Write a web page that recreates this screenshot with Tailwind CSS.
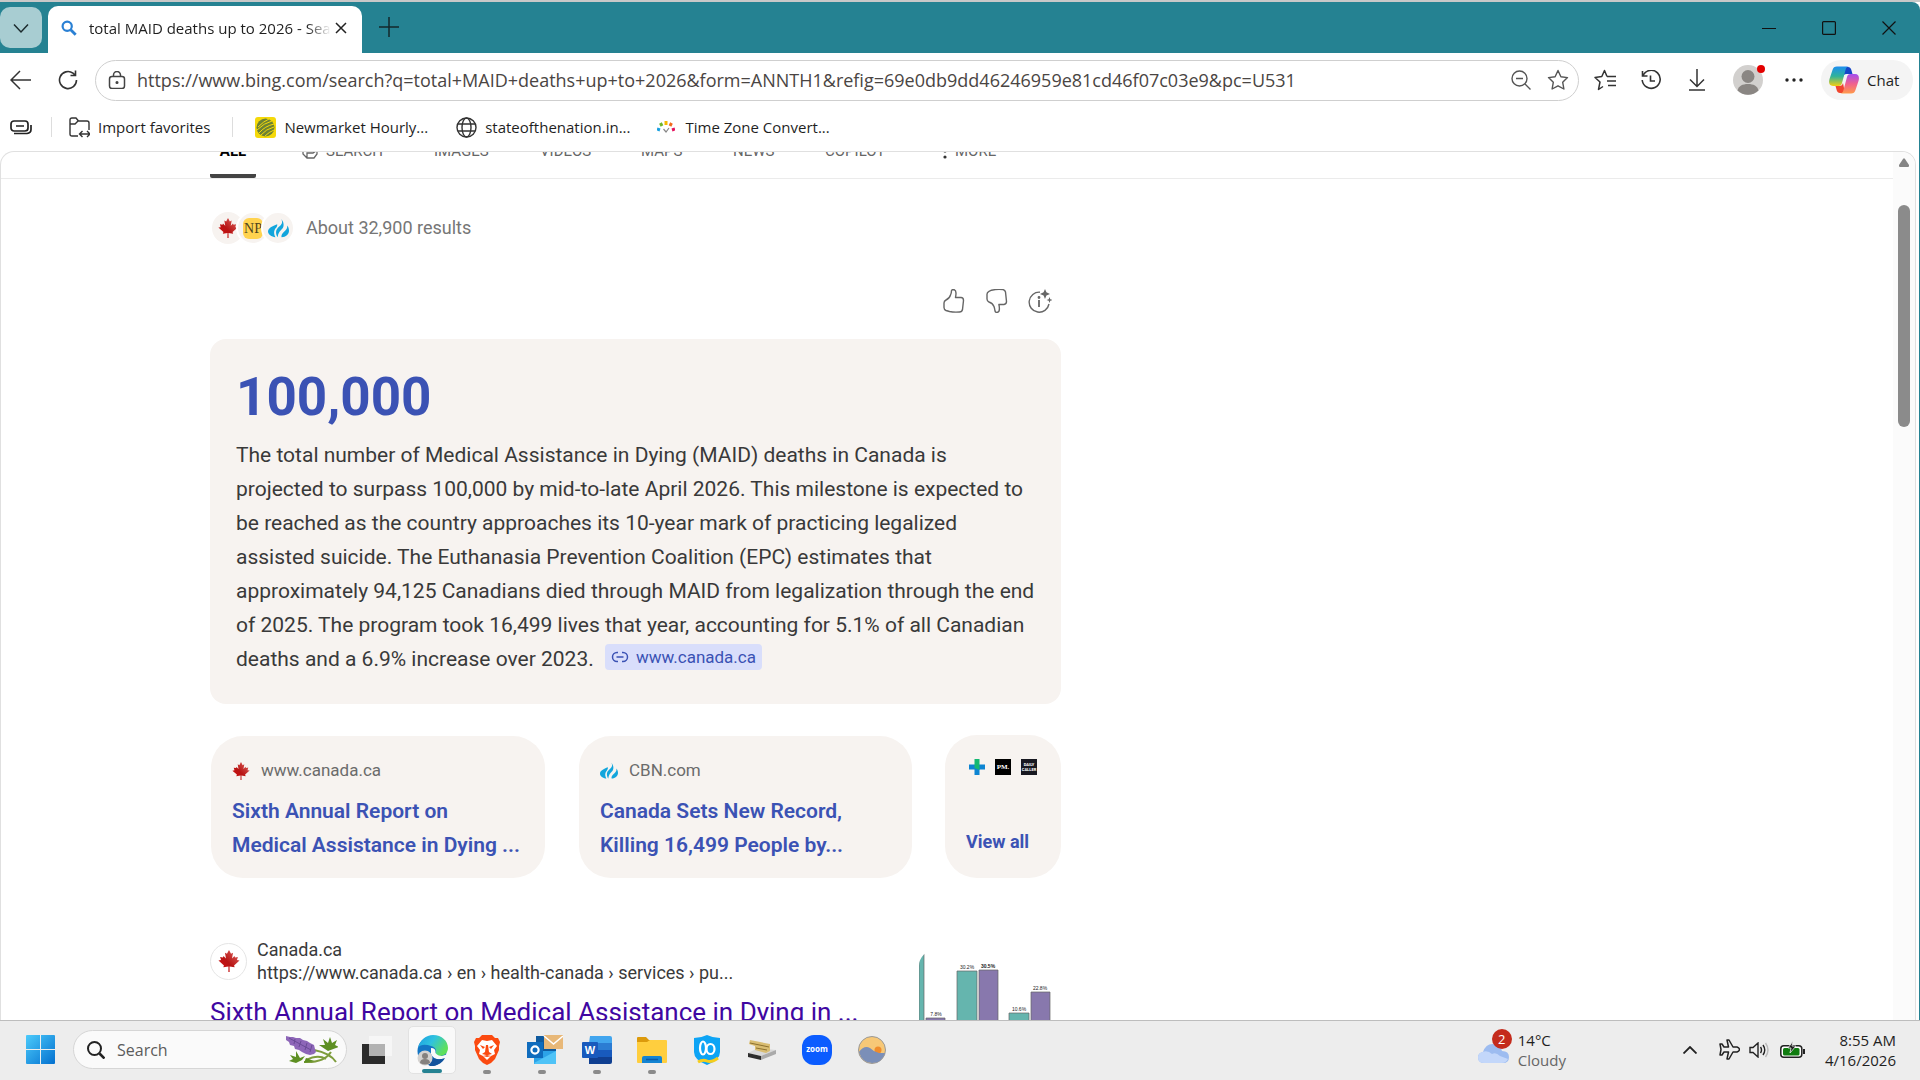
<!doctype html>
<html lang="en">
  <head>
    <meta charset="UTF-8">
    <title>total MAID deaths up to 2026 - Search</title>
    <script src="https://cdn.jsdelivr.net/npm/@tailwindcss/browser@4"></script>
  </head>
  <body class="bg-white font-['Open_Sans','Noto_Sans',sans-serif] text-[#1f1f1f]">

    <!-- shared shapes -->
    <svg class="absolute size-0">
      <defs>
        <linearGradient id="leaf-fill" x1="0" y1="1" x2="1" y2="0"><stop offset="0" stop-color="#d40d0d"/><stop offset=".45" stop-color="#b81414"/><stop offset="1" stop-color="#df6a64"/></linearGradient>
        <symbol id="leaf" viewBox="0 0 24 24">
          <path fill="url(#leaf-fill)" d="M12 0 9.8 4.2 7.6 3.1 8.7 9.2 6 6.500 5.400 8.100 2.300 7.500 3.300 11 0.500 11.500 6.500 16.800 5.800 18.900 11.400 18.100 11.300 24h1.400l-.1-5.900 5.600.8-.7-2.100 6-5.300-2.800-.5 1-3.500-3.100.6-.6-1.600-2.700 2.700 1.100-6.100-2.200 1.100z"/>
        </symbol>
        <symbol id="flame" viewBox="0 0 24 24">
          <path fill="#12a5dc" d="M15 1c2.500 4 .5 6.500-2.500 9-3.500 3-4.500 7-1.500 12 .5-5 3-7.500 5.500-10C18.500 9.500 18.500 4.500 15 1zM22 8.500c.3 4-2 5.500-4.500 8-1.800 1.900-2.500 3.700-2 5.500 5-.3 8.500-3.500 8.500-7.500 0-2.500-.8-4.500-2-6zM10.500 7C5 9 0 11.500 0 15.500c0 3.500 4 6 8.500 6.500C6 17 7 14 9 11.500c1.200-1.500 1.800-3 1.500-4.500z"/>
        </symbol>
      </defs>
    </svg>

    <div class="h-screen flex flex-col overflow-hidden border-t-2 border-[#c8c8c8]">

      <!-- title bar -->
      <div class="h-[51px] shrink-0 bg-[#258292] rounded-tr-lg flex items-start">
        <button class="mt-[5px] w-[42px] h-[41px] rounded-[10px] bg-[#a8cdd2] flex items-center justify-center" aria-label="Tab actions">
          <svg class="size-4" viewBox="0 0 16 16" fill="none" stroke="#1c2b2e" stroke-width="1.5"><path d="M1 4.500 8 12l7-7.500"/></svg>
        </button>
        <div class="mt-1 ml-[6px] w-[314px] h-[47px] rounded-t-[10px] bg-white flex items-center pl-[13px] pr-3 pb-[3px]">
          <svg class="size-4 shrink-0" viewBox="0 0 16 16" fill="none" stroke="#2a80d4" stroke-width="2.200"><circle cx="6.200" cy="6.200" r="4.600"/><path d="m9.700 9.700 5 5" stroke-width="2.800"/></svg>
          <span class="ml-3 w-[242px] overflow-hidden whitespace-nowrap text-[15px] mask-r-from-90%">total MAID deaths up to 2026 - Search</span>
          <button class="shrink-0 ml-1" aria-label="Close tab"><svg class="size-3" viewBox="0 0 12 12" stroke="#222" stroke-width="1.500"><path d="m1 1 10 10M11 1 1 11"/></svg></button>
        </div>
        <button class="mt-[15px] ml-[17px]" aria-label="New tab"><svg class="size-5" viewBox="0 0 20 20" stroke="#13282b" stroke-width="1.500"><path d="M10 0v20M0 10h20"/></svg></button>
        <div class="ml-auto mt-[19px] mr-6 flex items-center gap-[46px]">
          <button aria-label="Minimize"><svg class="size-[14px]" viewBox="0 0 14 14" stroke="#111"><path d="M0 7.500h14"/></svg></button>
          <button aria-label="Maximize"><svg class="size-[14px]" viewBox="0 0 14 14" fill="none" stroke="#111" stroke-width="1.200"><rect x=".6" y=".6" width="12.800" height="12.800" rx="1"/></svg></button>
          <button aria-label="Close"><svg class="size-[14px]" viewBox="0 0 14 14" stroke="#111" stroke-width="1.200"><path d="m.5.5 13 13m0-13-13 13"/></svg></button>
        </div>
      </div>

      <!-- toolbar -->
      <div class="shrink-0 h-[54px] flex items-center pl-[10px] pr-[6px] border-r border-[#258292]">
        <button aria-label="Back"><svg class="size-[22px]" viewBox="0 0 22 22" fill="none" stroke="#333" stroke-width="1.500"><path d="M21 11H1M10 2l-9 9 9 9"/></svg></button>
        <button class="ml-[26px]" aria-label="Refresh"><svg class="size-5" viewBox="0 0 20 20" fill="none" stroke="#333" stroke-width="1.600"><path d="M18.500 10A8.500 8.500 0 1 1 15 3.200L17 5M17.500.500V5.500H12.500"/></svg></button>
        <div class="ml-[17px] flex-1 h-[41px] rounded-full border border-[#cfcfcf] flex items-center pl-3 pr-[9px]">
          <svg class="size-[18px] shrink-0" viewBox="0 0 18 18" fill="none" stroke="#444" stroke-width="1.500"><rect x="1.500" y="5.500" width="15" height="12" rx="2.500"/><path d="M5.500 5.500V4a3.500 3.500 0 0 1 7 0v1.500"/><circle cx="9" cy="11.500" r=".8" fill="#444"/></svg>
          <input type="text" aria-label="Address" class="ml-[11px] flex-1 text-[18px] text-[#4a4543] outline-none" value="https://www.bing.com/search?q=total+MAID+deaths+up+to+2026&amp;form=ANNTH1&amp;refig=69e0db9dd46246959e81cd46f07c03e9&amp;pc=U531">
          <button aria-label="Zoom"><svg class="size-5" viewBox="0 0 20 20" fill="none" stroke="#555" stroke-width="1.400"><circle cx="8.500" cy="8.500" r="7.500"/><path d="m14 14 5.500 5.500M5 8.500h7"/></svg></button>
          <button class="ml-4" aria-label="Add to favorites"><svg class="size-[22px]" viewBox="0 0 22 22" fill="none" stroke="#555" stroke-width="1.400" stroke-linejoin="round"><path d="m11 1.500 2.900 6.200 6.600.9-4.800 4.700 1.200 6.700-5.900-3.200L5.100 20l1.200-6.700L1.500 8.600l6.600-.9z"/></svg></button>
        </div>
        <div class="ml-[15px] flex items-center gap-[25px]">
          <button aria-label="Favorites"><svg class="size-[22px]" viewBox="0 0 22 22" fill="none" stroke="#333" stroke-width="1.500" stroke-linejoin="round"><path d="M13 7.500 10.500 1.500 7.800 7.500 1 8.500l5 4.500L4.500 20.500l4.500-3M13 7.500h9M13 12h9M14 16.500h8"/></svg></button>
          <button aria-label="History"><svg class="size-5" viewBox="0 0 20 20" fill="none" stroke="#333" stroke-width="1.600"><path d="M2 5.500A9 9 0 1 1 1.200 10M1.500 1v5h5M9.500 5.500v5.500H14"/></svg></button>
          <button aria-label="Downloads"><svg class="size-[22px]" viewBox="0 0 22 22" fill="none" stroke="#333" stroke-width="1.500"><path d="M11 0v17M4 10.500l7 7 7-7M3 21h16"/></svg></button>
          <button class="relative" aria-label="Profile">
            <svg class="size-[30px]" viewBox="0 0 30 30"><circle cx="15" cy="15" r="15" fill="#d2d0ce"/><circle cx="15" cy="11.500" r="6.500" fill="#8a8683"/><path fill="#8a8683" d="M4.500 25.500c1-4.500 5-6.500 10.500-6.500s9.500 2 10.500 6.500a15 15 0 0 1-21 0z"/></svg>
            <span class="absolute top-0 -right-[2px] size-2 rounded-full bg-[#e30000]"></span>
          </button>
        </div>
        <button class="ml-[22px]" aria-label="Settings and more"><svg class="w-[18px] h-5" viewBox="0 0 18 20" fill="#222"><circle cx="2" cy="10" r="1.700"/><circle cx="9" cy="10" r="1.700"/><circle cx="16" cy="10" r="1.700"/></svg></button>
        <button class="ml-[18px] h-10 w-[92px] rounded-full bg-[#f4f4f4] flex items-center pl-2 gap-2 text-[15px]">
          <svg class="size-[30px]" viewBox="0 0 30 30">
            <defs>
              <linearGradient id="cp-a" x1="0" y1="0" x2="0" y2="1"><stop offset="0" stop-color="#1c8ef0"/><stop offset=".5" stop-color="#2fb39a"/><stop offset="1" stop-color="#f4cf10"/></linearGradient>
              <linearGradient id="cp-b" x1="0" y1="0" x2="0" y2="1"><stop offset="0" stop-color="#a24ff0"/><stop offset=".5" stop-color="#f0608e"/><stop offset="1" stop-color="#ff9a4a"/></linearGradient>
            </defs>
            <path fill="#1546c8" d="M14 2h5c2 0 3 1.500 3.500 3.500l1 3.500h-6c-2 0-3 1-3.500 3z"/>
            <path fill="url(#cp-a)" d="M8 1.500h12c-2 0-3 1.500-3.500 3.500l-3.500 13c-.5 2-1.500 3-3.500 3H4c-4 0-4.500-3.500-3.500-7L3.500 5C4.200 2.500 5.500 1.500 8 1.500z"/>
            <path fill="#f0452e" d="M16 28h-5c-2 0-3-1.500-3.500-3.500l-1-3.500h4c2 0 3-1 3.500-3z"/>
            <path fill="url(#cp-b)" d="M22 28.500H11c2 0 3-1.500 3.500-3.500L18 12c.5-2 1.500-3 3.500-3H26c4 0 4.500 3.500 3.500 7l-3 9c-.7 2.500-2 3.500-4.500 3.500z"/>
          </svg>
          Chat
        </button>
      </div>

      <!-- favorites bar -->
      <div class="shrink-0 h-[44px] flex items-center pl-[10px] pb-1 text-[15px] border-r border-[#258292]">
        <button aria-label="Collections"><svg class="w-[22px] h-4" viewBox="0 0 22 16" fill="none" stroke="#222" stroke-width="1.700"><rect x="1" y="2" width="17" height="10" rx="3"/><path d="M6 7h8M4 14.500h13q4-.5 4-4V6"/></svg></button>
        <span class="ml-[19px] h-5 w-px bg-[#ddd]"></span>
        <button class="ml-[17px] flex items-center gap-2">
          <svg class="size-[21px]" viewBox="0 0 21 21" fill="none" stroke="#333" stroke-width="1.400"><path d="M9 19H3q-2 0-2-2V3q0-2 2-2h4l2.500 3H18q2 0 2 2v7M1 7h5l3-3M11 17h10M13.500 14l-3 3 3 3M18 14l3 3-3 3"/></svg>
          Import favorites
        </button>
        <span class="ml-[22px] h-5 w-px bg-[#ddd]"></span>
        <a href="#" class="ml-[22px] flex items-center gap-2">
          <svg class="size-[21px]" viewBox="0 0 21 21"><rect width="21" height="21" rx="3" fill="#f5d90a"/><circle cx="10.500" cy="10.500" r="9" fill="#6d8233"/><path d="M3 10q6-6 11-8M2 13q7-7 15-9M4 16Q10 9 19 7M6 18q5-6 13-8M10 19q4-4 9-6" stroke="#f5d90a" fill="none"/></svg>
          Newmarket Hourly...
        </a>
        <a href="#" class="ml-7 flex items-center gap-2">
          <svg class="size-[21px]" viewBox="0 0 21 21" fill="none" stroke="#333" stroke-width="1.400"><circle cx="10.500" cy="10.500" r="9.500"/><ellipse cx="10.500" cy="10.500" rx="4.500" ry="9.500"/><path d="M2 7h17M2 14h17"/></svg>
          stateofthenation.in...
        </a>
        <a href="#" class="ml-[27px] flex items-center gap-[10px]">
          <svg class="w-[18px] h-3" viewBox="0 0 18 12" fill="none" stroke-width="3"><path stroke="#18a0e0" d="m0 8 3 1"/><path stroke="#6fb52c" d="m3.500 2 1.500 3"/><path stroke="#f6b800" d="M9 0v4"/><path stroke="#f06a1e" d="m14.500 2-1.500 3"/><path stroke="#e5125d" d="m18 8-3 1"/><path stroke="#888" stroke-width="1.200" d="m6.500 8 2.500 3 3-4"/></svg>
          Time Zone Convert...
        </a>
      </div>

      <!-- page -->
      <div class="flex-1 min-h-0 flex overflow-hidden border-r border-[#258292] pr-[3px]">
        <div class="flex-1 min-w-0 flex border border-b-0 border-[#e0e0e0] rounded-t-[14px] overflow-hidden font-[Roboto,sans-serif]">
          <main class="flex-1 min-w-0">

            <!-- scope tabs, scrolled most of the way under the toolbar -->
            <nav class="h-[27px] border-b border-[#ebebeb] overflow-hidden flex items-end pl-[209px] text-[15px] text-[#666]">
              <div class="flex items-end h-10 w-full">
                <a href="#" class="w-[46px] border-b-4 border-[#444] text-center font-bold text-black pb-3 rounded-b-xs">ALL</a>
                <a href="#" class="ml-[46px] w-[80px] flex items-center gap-2 pb-4"><svg class="size-4 shrink-0" viewBox="0 0 16 16" fill="none" stroke="#666" stroke-width="1.300"><path d="M1 5v6l4 4h7l3-4V5L8 1zM5 15v-5h6l3-2"/></svg>SEARCH</a>
                <a href="#" class="ml-[52px] w-[54px] pb-4">IMAGES</a>
                <a href="#" class="ml-[52px] w-[50px] pb-4">VIDEOS</a>
                <a href="#" class="ml-[51px] w-[42px] pb-4">MAPS</a>
                <a href="#" class="ml-[50px] w-[42px] pb-4">NEWS</a>
                <a href="#" class="ml-[50px] w-[60px] pb-4">COPILOT</a>
                <a href="#" class="ml-[58px] flex items-center gap-2 pb-4"><svg class="w-1 h-4" viewBox="0 0 4 16" fill="#333"><circle cx="2" cy="2" r="1.600"/><circle cx="2" cy="8" r="1.600"/><circle cx="2" cy="14" r="1.600"/></svg>MORE</a>
              </div>
            </nav>

            <div class="ml-[209px] w-[851px]">
              <div class="mt-[33px] h-8 flex items-center text-lg text-[#767676]">
                <div class="flex items-center pl-[2px]">
                  <span class="size-8 rounded-full bg-[#f7f3f0] flex items-center justify-center"><svg class="size-5"><use href="#leaf"/></svg></span>
                  <span class="-ml-2 size-[34px] rounded-full bg-[#f7f3f0] border-2 border-white flex items-center justify-center"><span class="w-5 h-[21px] shrink-0 rounded-md bg-[#ffd34f] text-[#4f4320] text-[14px] leading-[21px] text-center font-['Liberation_Serif',serif]">NP</span></span>
                  <span class="-ml-[9px] size-[34px] rounded-full bg-[#f7f3f0] border-2 border-white flex items-center justify-center"><svg class="size-[21px]"><use href="#flame"/></svg></span>
                </div>
                <span class="ml-[11px]">About 32,900 results</span>
              </div>

              <div class="mt-[43px] h-[28px] flex items-center justify-end gap-[19px] pr-[9px]">
                <button aria-label="Like"><svg class="size-6" viewBox="0 0 24 24" fill="none" stroke="#666" stroke-width="1.400" stroke-linejoin="round"><path d="M8.500 6q1-2 1-4.500Q10 .5 11.500.500q2.500.3 2.500 3.500 0 2.500-.5 4.500H19q2.500 0 2.500 3l-1 9q-.5 2.500-3 2.500-5.500.5-10-.5L4 21.500q-2-1-2-3V14q0-2 2-3 3.500-1.500 4.500-5z"/></svg></button>
                <button aria-label="Dislike"><svg class="size-6" viewBox="0 0 24 24" fill="none" stroke="#666" stroke-width="1.400" stroke-linejoin="round"><path d="M9 17.500q.7 2 1 4.500.5 1.500 2 1.400 2.400-.2 2.400-3.400 0-2.500-.5-4.500H19q2.500-.5 2.500-3L20.500 3q-.5-2-2.500-2.400-6-.6-11.500.6L4 2.300q-2 1-2 3V10q0 2 2 3 3.500 1 5 4.500z"/></svg></button>
                <button aria-label="About this answer"><svg class="size-6" viewBox="0 0 24 24" fill="none" stroke="#666" stroke-width="1.400"><path d="M12 3.200A10 10 0 1 0 21 15"/><path d="M11 11v7" stroke-width="1.800"/><circle cx="11" cy="8.500" r=".7" fill="#666"/><path fill="#666" stroke="none" d="m17 0 1.400 3.200L22 5l-3.600 1.500L17 10l-1.400-3.500L12 5l3.600-1.800zM21.500 8l.8 2.200 2.200.8-2.200.8-.8 2.200-.8-2.200-2.200-.8 2.200-.8z"/></svg></button>
              </div>

              <section class="mt-6 rounded-2xl bg-[#f7f3f0] px-[26px] pt-[26px] pb-7">
                <h2 class="text-[53px] leading-[64px] font-bold text-[#3b52b4]">100,000</h2>
                <p class="mt-[9px] text-[21px] leading-[34px] text-[#393939] whitespace-nowrap">The total number of Medical Assistance in Dying (MAID) deaths in Canada is<br>projected to surpass 100,000 by mid-to-late April 2026. This milestone is expected to<br>be reached as the country approaches its 10-year mark of practicing legalized<br>assisted suicide. The Euthanasia Prevention Coalition (EPC) estimates that<br>approximately 94,125 Canadians died through MAID from legalization through the end<br>of 2025. The program took 16,499 lives that year, accounting for 5.1% of all Canadian<br>deaths and a 6.9% increase over 2023.
                  <a href="#" class="ml-[6px] inline-flex h-[26px] items-center gap-[7px] rounded bg-[#d9defb] px-[6px] align-[2px] text-[17px] leading-[26px] text-[#3b52b4]"><svg class="w-[18px] h-[14px]" viewBox="0 0 18 14" fill="none" stroke="#3b52b4" stroke-width="1.500"><path d="M7 2.500H6a4.500 4.500 0 0 0 0 9h1M11 2.500h1a4.500 4.500 0 0 1 0 9h-1M5.500 7h7"/></svg>www.canada.ca</a>
                </p>
              </section>

              <div class="mt-[31px] flex items-end pl-px">
                <a href="#" class="w-[334px] h-[142px] rounded-[32px] bg-[#f7f3f0] pl-[21px] pt-[22px]">
                  <div class="h-[26px] flex items-center gap-[11px] text-[17px] text-[#6b6b6b]"><svg class="size-[18px]"><use href="#leaf"/></svg>www.canada.ca</div>
                  <h3 class="mt-[10px] text-[21px] leading-[34px] font-semibold text-[#3b52b4]">Sixth Annual Report on<br>Medical Assistance in Dying ...</h3>
                </a>
                <a href="#" class="ml-[34px] w-[333px] h-[142px] rounded-[32px] bg-[#f7f3f0] pl-[21px] pt-[22px]">
                  <div class="h-[26px] flex items-center gap-[11px] text-[17px] text-[#6b6b6b]"><svg class="size-[18px]"><use href="#flame"/></svg>CBN.com</div>
                  <h3 class="mt-[10px] text-[21px] leading-[34px] font-semibold text-[#3b52b4]">Canada Sets New Record,<br>Killing 16,499 People by...</h3>
                </a>
                <a href="#" class="ml-auto w-[116px] h-[143px] rounded-[32px] bg-[#f7f3f0] pl-[21px] py-6 flex flex-col justify-between">
                  <div class="flex gap-[10px] pl-[3px]">
                    <svg class="size-4" viewBox="0 0 16 16"><path fill="#0d84d2" d="M0 5.500h16v5H0zM5.500 10h5v6h-5z"/><path fill="#14b872" d="M5.500 0h5v11l-5-2z"/></svg>
                    <span class="size-4 bg-black text-white text-[7px] leading-4 text-center font-bold font-['Liberation_Serif',serif]">PM.</span>
                    <span class="size-4 bg-[#181820] text-white text-[4px] leading-[5px] pt-[3px] text-center font-bold">DAILY<br>CALLER</span>
                  </div>
                  <span class="text-[18px] leading-6 font-bold text-[#3b52b4]">View all</span>
                </a>
              </div>

              <article class="mt-[60px] flex justify-between">
                <div class="min-w-0">
                  <div class="flex items-center gap-[10px] text-[#3a3a3a]">
                    <span class="size-[37px] rounded-full border border-[#e5e5e5] flex items-center justify-center"><svg class="size-[22px]"><use href="#leaf"/></svg></span>
                    <div class="text-[18px] leading-[23px]">Canada.ca<br>https://www.canada.ca › en › health-canada › services › pu...</div>
                  </div>
                  <a href="#" class="block mt-3 text-[26px] leading-8 text-[#4007a2]">Sixth Annual Report on Medical Assistance in Dying in ...</a>
                </div>
                <svg class="mt-3 w-[142px] h-[80px] rounded-tl-2xl shrink-0" viewBox="0 0 142 80">
                  <g stroke="#666" stroke-width=".7">
                    <path fill="#65b5ae" d="M0 0h5v80H0zM38 21h20v59H38zM90 63h20v17H90z"/>
                    <path fill="#8878ad" d="M7 68h19v12H7zM60 20h19v60H60zM112 42h19v38h-19z"/>
                  </g>
                  <g font-family="Liberation Sans, sans-serif" font-size="5" fill="#222" text-anchor="middle"><text x="17" y="66">7.8%</text><text x="48" y="19">30.2%</text><text x="69" y="18" font-weight="bold">30.5%</text><text x="100" y="61">10.6%</text><text x="121" y="40">22.8%</text></g>
                </svg>
              </article>
            </div>
          </main>

          <!-- scrollbar -->
          <div class="w-[22px] bg-[#fbfbfb] flex flex-col items-center pt-[6px]">
            <svg class="w-[10px] h-[9px]" viewBox="0 0 10 9" fill="#858585"><path d="M4 1q1-1.500 2 0l4 6q.5 1.500-1 2H1q-1.500-.5-1-2z"/></svg>
            <div class="mt-[38px] w-3 h-[222px] rounded-full bg-[#8b8b8b]"></div>
          </div>
        </div>
      </div>

      <!-- taskbar -->
      <footer class="shrink-0 h-[60px] border-t border-[#bdbdbd] bg-[#ededed] flex items-center pl-[26px] pr-6 pb-[2px]">
        <button aria-label="Start"><svg class="size-[29px]" viewBox="0 0 29 29"><defs><linearGradient id="win" x1="0" y1="0" x2="1" y2="1"><stop offset="0" stop-color="#4ccbfb"/><stop offset="1" stop-color="#0370cf"/></linearGradient></defs><path fill="url(#win)" d="M1 0h13v14H0V1q0-1 1-1zM15 0h13q1 0 1 1v13H15zM0 15h14v14H1q-1 0-1-1zM15 15h14v13q0 1-1 1H15z"/></svg></button>
        <label class="ml-[18px] w-[274px] h-[39px] rounded-full border border-[#d6d6d6] bg-[#fafafa] flex items-center pl-[13px] pr-2">
          <svg class="size-[18px] shrink-0" viewBox="0 0 18 18" fill="none" stroke="#222" stroke-width="2"><circle cx="7.500" cy="7.500" r="6.500"/><path d="m12.500 12.500 5 5" stroke-width="2.600"/></svg>
          <input type="search" placeholder="Search" class="ml-3 w-[140px] text-[16px] placeholder:text-[#5c5c5c] outline-none">
          <svg class="ml-auto w-[52px] h-[30px]" viewBox="0 0 52 30" fill="none">
            <path stroke="#7d9c3c" stroke-width="2" d="M28 15q16 3 22 12M18 27q20 1 27-10M20 25q12-6 20-1"/>
            <path fill="#5d8f22" d="M42 16l-9-6 6 0-2-6 5 4 2-6 2 6 5-3-2 5 4 2zM10 28l-7-2 4-2-3-4 6 2 0-6 4 7 5-2-3 4zM18 28l2-5 8 3z"/>
            <path fill="#8d66b8" d="M0 1l4 1 3 0 3 1 4 0 3 2 4 1 3 2 4 2 1 4 1 3-2 2-4 1-4-1-4-2-3-2-4-1-1-3-4-1-1-3-3-2z"/>
            <path stroke="#6a4a96" stroke-width="1" d="M3 3l22 12M9 4l-1 5M15 6l-2 6M21 8l-2 7M26 10l-2 7"/>
          </svg>
        </label>
        <div class="ml-[6px] flex items-center gap-[7px]">
          <button class="size-12 flex items-center justify-center" aria-label="Task view"><svg class="w-[30px] h-7" viewBox="0 0 30 28"><path fill="#2b2b2b" d="M0 8h23v20H0z"/><path fill="#f6f6f6" fill-opacity=".92" d="M7 0h23v20H7z"/><path fill="#b2b2b2" d="M7 8h16v12H7z"/></svg></button>
          <button class="size-12 rounded-[5px] bg-[#f9f9f9] border border-[#e2e2e2] flex flex-col items-center justify-between pt-2" aria-label="Microsoft Edge">
            <svg class="size-[31px]" viewBox="0 0 31 31"><defs><linearGradient id="edge-top" x1="0" y1="0" x2="1" y2=".5"><stop offset="0" stop-color="#1b9de2"/><stop offset=".5" stop-color="#2fc2df"/><stop offset="1" stop-color="#5fe05a"/></linearGradient></defs><circle cx="15" cy="16" r="14.500" fill="#1475c4"/><path fill="url(#edge-top)" d="M1 13C3 5 9 0 16 0c9 0 15 6 15 13 0 5-4 8-8 8-3 0-5-1-5-2 2-3 1-7-4-8C9 9 3 9 1 13z"/><path fill="#f9f9f9" d="M14 13q5 0 4.500 5 2 3 6.500 3l6-2v6l-4-1q-10 2-13-5z"/><path fill="#12539c" d="M13 17c0 6 6 9 15 6-3 6-11 9-15 8-5-3-4-11 0-14z"/><circle cx="8" cy="23" r="7.500" fill="#d4d2d0"/><circle cx="8" cy="21" r="3" fill="#85817e"/><path fill="#85817e" d="M3 28q0-4 5-4t5 4q-5 3-10 0z"/></svg>
            <span class="w-5 h-1 rounded-full bg-[#258292]"></span>
          </button>
          <button class="size-12 flex flex-col items-center justify-between pt-[9px]" aria-label="Brave">
            <svg class="w-[26px] h-[30px]" viewBox="0 0 26 30"><path fill="#fb4a10" d="M8 0h10l3 3 3 0 2 4-1 4 0 4-4 9q-3 4-8 6-5-2-8-6L1 15v-4L0 7l2-4h3z"/><path fill="#fff" d="M8 5l5 1 5-1 5 6-3 4 1 4-4 2-4 4-4-4-4-2 1-4-3-4z"/><path fill="#fb4a10" d="M6 10l5 2-2 2zM20 10l-5 2 2 2zM12 10h2l1 7 3 2-4 1h-2l-4-1 3-2zM9 21l4-1 4 1-4 1z"/></svg>
            <span class="w-2 h-1 rounded-full bg-[#8a8a8a]"></span>
          </button>
          <button class="size-12 flex flex-col items-center justify-between pt-[9px]" aria-label="Outlook">
            <svg class="w-[42px] h-[30px] shrink-0" viewBox="-6 0 42 30"><path fill="#0f5a9e" d="M9 1h20v26H9z"/><path fill="#1f87d6" d="M17 1h12v13H17z"/><path fill="#2ca3e8" d="M7 16h22v13H7z"/><path fill="#4fc3f7" d="m7 28 22-12v13H8z"/><path fill="#0f6cbd" d="M0 7h16v16H0z"/><circle cx="8" cy="15" r="3.600" fill="none" stroke="#fff" stroke-width="2.200"/><path fill="#e8b878" d="M17 0h19v14H17z"/><path fill="none" stroke="#fff" stroke-width="1.500" d="m17 1 9.500 8L36 1"/></svg>
            <span class="w-2 h-1 rounded-full bg-[#8a8a8a]"></span>
          </button>
          <button class="size-12 flex flex-col items-center justify-between pt-[10px]" aria-label="Word">
            <svg class="w-[30px] h-7" viewBox="0 0 30 28"><path fill="#41a5ee" d="M8 0h20q2 0 2 2v5H7z"/><path fill="#2b7cd3" d="M7 7h23v7H7z"/><path fill="#185abd" d="M7 14h23v7H7z"/><path fill="#103f91" d="M7 21h23v5q0 2-2 2H7z"/><rect y="6" width="16" height="16" rx="1" fill="#185abd"/><text x="8" y="18" font-family="Liberation Sans, sans-serif" font-size="11" font-weight="bold" fill="#fff" text-anchor="middle">W</text></svg>
            <span class="w-2 h-1 rounded-full bg-[#8a8a8a]"></span>
          </button>
          <button class="size-12 flex flex-col items-center justify-between pt-[11px]" aria-label="File Explorer">
            <svg class="w-[30px] h-[27px]" viewBox="0 0 30 27"><path fill="#dc9a0c" d="M0 1q0-1 1-1h8l3 3h8v5H0z"/><path fill="#ffce3e" d="M0 5h10l3-2h16q1 0 1 1v21q0 1-1 1H1q-1 0-1-1z"/><path fill="#1484d2" d="M5 26v-5q0-2 2-2h16q2 0 2 2v5z"/><path stroke="#0a5aa6" stroke-width="1.500" d="M9 22.500h12"/></svg>
            <span class="w-2 h-1 rounded-full bg-[#8a8a8a]"></span>
          </button>
          <button class="size-12 flex items-center justify-center" aria-label="VPN"><svg class="w-[26px] h-[30px]" viewBox="0 0 26 30"><path fill="#0da4f5" d="M13 0q6 3 13 3v14q0 8-13 13Q0 25 0 17V3q7 0 13-3z"/><ellipse cx="9" cy="13" rx="3" ry="6.500" fill="none" stroke="#fff" stroke-width="2.200"/><ellipse cx="16.500" cy="14" rx="4" ry="5" fill="none" stroke="#fff" stroke-width="2.200"/><path fill="none" stroke="#f5cd1c" stroke-width="3" d="M4 27q5-3 9-1t11-3"/></svg></button>
          <button class="size-12 flex items-center justify-center" aria-label="Disk tool"><svg class="w-7 h-5" viewBox="0 0 28 20"><path fill="#d8d8d8" d="m0 13 10-5 18 2-15 6z"/><path fill="#2d2d2d" d="m0 13 13 3v4L0 17z"/><path fill="#aaa" d="m13 16 15-6v4l-15 6z"/><path fill="#d9bd72" d="M2 0l20 4v7l-4 2-11-3V6L1 4z"/><path stroke="#8d712f" d="m2 3 19 4M8 8l11 2"/></svg></button>
          <button class="size-12 flex items-center justify-center" aria-label="Zoom"><span class="size-[30px] rounded-xl bg-[#0b5cff] text-white text-[8px] leading-[28px] font-bold">zoom</span></button>
          <button class="size-12 flex items-center justify-center" aria-label="Breeze"><svg class="size-7" viewBox="0 0 28 28"><circle cx="14" cy="14" r="13.500" fill="#f7c877" stroke="#999"/><circle cx="20" cy="14" r="3.500" fill="#f08c2c"/><path fill="#7b8fb8" d="M1 16q5-7 11-4 4 4 9 5l6 0q-3 10-13 10T1 16z"/></svg></button>
        </div>

        <button class="ml-auto flex items-center gap-[9px] text-left text-[15px] leading-5" aria-label="Weather">
          <span class="relative">
            <svg class="w-[31px] h-5 mt-[6px]" viewBox="0 0 31 20"><path fill="#9dbcf0" d="M5 9Q8 0 16 1q7 1 8 7 7 0 7 6t-6 6H6q-6 0-6-6 0-4 5-5z"/><path fill="#c3d7fa" d="M2 10q7-4 12 1 4-2 8 2l8 3q-2 4-6 4H6q-6 0-6-6 0-2 2-4z"/></svg>
            <span class="absolute -top-2 left-[14px] size-5 rounded-full bg-[#c42b1c] text-white text-[13px] leading-5 text-center">2</span>
          </span>
          <span>14°C<br><span class="text-[#666]">Cloudy</span></span>
        </button>
        <div class="ml-[117px] flex items-center">
          <button aria-label="Show hidden icons"><svg class="w-[14px] h-2" viewBox="0 0 14 8" fill="none" stroke="#222" stroke-width="1.800"><path d="m.5 7.500 6.500-6.500 6.500 6.500"/></svg></button>
          <svg class="ml-[22px] size-[21px]" viewBox="0 0 21 21" fill="none" stroke="#222" stroke-width="1.500" stroke-linejoin="round"><path d="M8 1h2l4 7h4q2.500 1 2.500 2.500T18 13h-4l-4 7H8l1.500-7H5l-2 3H1l1-5.500L1 5h2l2 3h4.500z"/></svg>
          <svg class="ml-[9px] w-5 h-4" viewBox="0 0 20 16" fill="none" stroke="#222" stroke-width="1.400"><path d="M1 5.500h3l5-4.500v14l-5-4.500H1zM11.500 5q2 3 0 6M14 3q3.500 5 0 10"/><path stroke="#bbb" d="M16.500 1q5 7 0 14"/></svg>
          <svg class="ml-[11px] w-[25px] h-[18px]" viewBox="0 0 25 18"><rect x=".8" y="4.800" width="21" height="11.500" rx="3" fill="#fff" stroke="#222" stroke-width="1.500"/><rect x="3" y="7" width="16.500" height="7.500" rx="1.500" fill="#107c10"/><path fill="#222" stroke="#ededed" stroke-width=".8" d="m13 0-5 7h3l-1 5 6-7h-4z"/><path stroke="#222" stroke-width="2" d="M24 8v5"/></svg>
        </div>
        <div class="ml-5 text-right text-[15px] leading-5">8:55 AM<br>4/16/2026</div>
      </footer>
    </div>

  </body>
</html>
